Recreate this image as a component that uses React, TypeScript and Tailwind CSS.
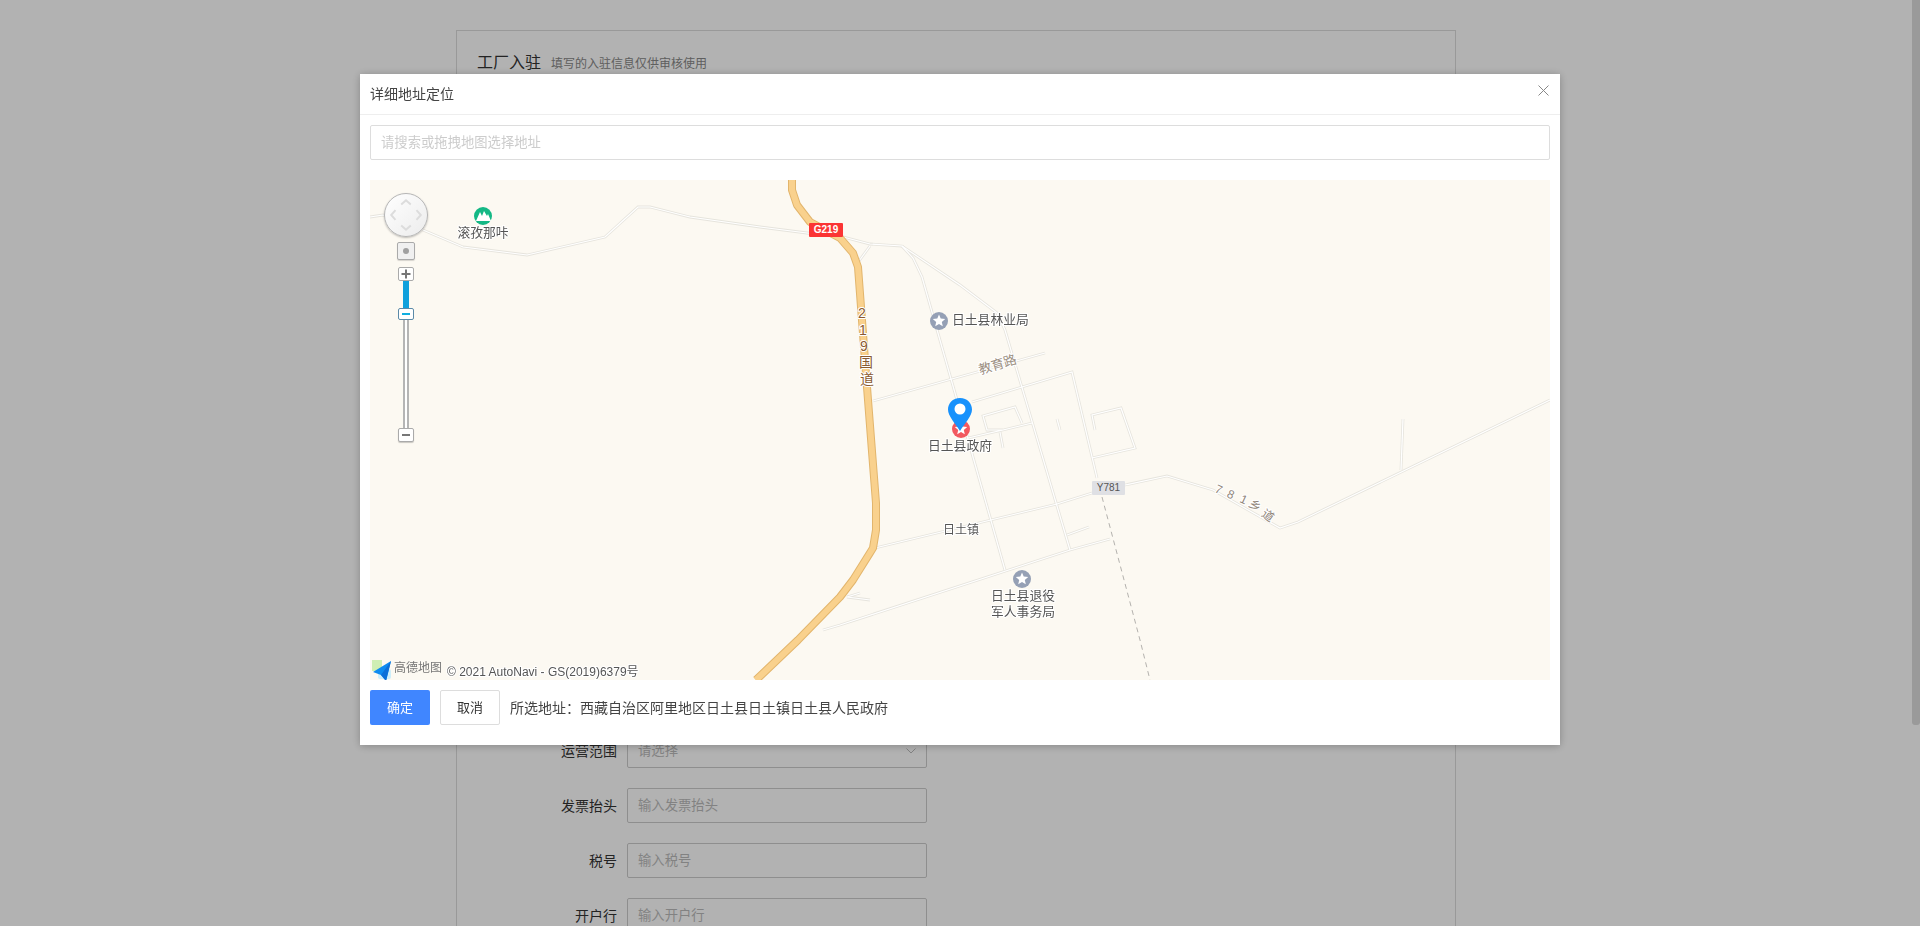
const minorRoads = [
  "M370 217 L383 215 L423 230 L463 247 L527 255 L605 237 L638 207 L650 207 L690 217 L760 227 L807 233 L843 237 L870 244 L902 246 L960 285 L997 313 L1005 330 L1070 550",
  "M870 246 L859 261",
  "M902 246 L913 258 L922 277 L957 400 L973 457 L1005 570",
  "M873 401 L1045 353",
  "M972 402 L1072 372 L1097 478",
  "M968 438 L1003 430 L1032 423 M1003 430 L987 430 L983 416 L1015 407 L1022 423",
  "M1000 432 L1003 448",
  "M1057 419 L1060 430",
  "M1095 430 L1092 415 L1121 408 L1135 448 L1092 458",
  "M875 548 L1057 504 L1092 493 L1125 485 L1167 476 L1213 490 L1280 528 L1298 522 L1550 400",
  "M823 630 L840 625 L1070 550 L1110 539",
  "M1067 535 L1089 527",
  "M847 597 L870 600 M847 597 L860 593",
  "M1403 419 L1401 470",
];

const mainRoad =
  "M792 180 L792 190 L797 205 L810 222 L840 238 L853 253 L858 267 L867 387 L876 503 L876 530 L873 548 L853 580 L840 597 L798 640 L756 680";

const starPoints = (cx: number, cy: number, r: number) => {
  const pts: string[] = [];
  for (let i = 0; i < 10; i++) {
    const rad = i % 2 === 0 ? r : r * 0.45;
    const a = (Math.PI / 5) * i - Math.PI / 2;
    pts.push(`${(cx + rad * Math.cos(a)).toFixed(1)},${(cy + rad * Math.sin(a)).toFixed(1)}`);
  }
  return pts.join(" ");
};

const Poi = ({ x, y, color }: { x: number; y: number; color: string }) => (
  <g>
    <circle cx={x} cy={y} r="9" fill={color} />
    <polygon points={starPoints(x, y, 6.5)} fill="#fff" />
  </g>
);

const MapLabel = ({
  x,
  y,
  children,
  size = 12.8,
  color = "#555",
  anchor = "middle",
  rotate,
}: {
  x: number;
  y: number;
  children: string;
  size?: number;
  color?: string;
  anchor?: "middle" | "start";
  rotate?: number;
}) => (
  <text
    x={x}
    y={y - 1.5}
    fontSize={size}
    fill={color}
    textAnchor={anchor}
    dominantBaseline="central"
    stroke="#fff"
    strokeWidth="2"
    paintOrder="stroke"
    transform={rotate ? `rotate(${rotate} ${x} ${y})` : undefined}
  >
    {children}
  </text>
);

const MapDrawing = () => (
  <svg viewBox="370 180 1180 500" className="block w-full h-full">
    <rect x="370" y="180" width="1180" height="500" fill="#fcf9f2" />
    {minorRoads.map((d, i) => (
      <path key={"c" + i} d={d} fill="none" stroke="#e6e4dd" strokeWidth="2.8" />
    ))}
    {minorRoads.map((d, i) => (
      <path key={"f" + i} d={d} fill="none" stroke="#ffffff" strokeWidth="1.2" />
    ))}
    <path d="M1102 497 L1140 640 L1150 680" fill="none" stroke="#b4b2ae" strokeWidth="1" strokeDasharray="5 4" />
    <path d={mainRoad} fill="none" stroke="#e2b56c" strokeWidth="8" strokeLinejoin="round" />
    <path d={mainRoad} fill="none" stroke="#f9d18d" strokeWidth="6" strokeLinejoin="round" />

    {/* road shields */}
    <rect x="809" y="223" width="34" height="14" rx="1" fill="#fb3434" />
    <text x="826" y="229.5" fontSize="10" fontWeight="700" fill="#fff" textAnchor="middle" dominantBaseline="central">
      G219
    </text>
    <rect x="1092" y="481" width="33" height="14" rx="1" fill="#dfe0e4" />
    <text x="1108.5" y="487.5" fontSize="10" fill="#555" textAnchor="middle" dominantBaseline="central">
      Y781
    </text>

    {/* vertical road name */}
    <MapLabel x={862} y={314} size={14} color="#8a5a30">2</MapLabel>
    <MapLabel x={863} y={331} size={14} color="#8a5a30">1</MapLabel>
    <MapLabel x={864} y={347} size={14} color="#8a5a30">9</MapLabel>
    <MapLabel x={866} y={363} size={14} color="#8a5a30">国</MapLabel>
    <MapLabel x={867} y={380} size={14} color="#8a5a30">道</MapLabel>

    <MapLabel x={998} y={366} size={13} color="#9c8f82" rotate={-17}>教育路</MapLabel>

    <MapLabel x={1218} y={491} size={12} color="#8f8478" rotate={25}>7</MapLabel>
    <MapLabel x={1230} y={496} size={12} color="#8f8478" rotate={25}>8</MapLabel>
    <MapLabel x={1243} y={501} size={12} color="#8f8478" rotate={25}>1</MapLabel>
    <MapLabel x={1254} y={507} size={12} color="#8f8478" rotate={35}>乡</MapLabel>
    <MapLabel x={1267} y={517} size={12} color="#8f8478" rotate={35}>道</MapLabel>

    {/* scenic spot */}
    <circle cx="483" cy="216" r="9" fill="#14b885" />
    <path d="M476 221 L480 212 L482 216 L484 211 L487 216 L488 214 L491 221 Z" fill="#fff" />
    <MapLabel x={483} y={234}>滚孜那咔</MapLabel>

    <Poi x={939} y={321} color="#95a0b5" />
    <MapLabel x={952} y={321} anchor="start">日土县林业局</MapLabel>

    <Poi x={961} y={429} color="#f2585f" />
    <MapLabel x={960} y={447}>日土县政府</MapLabel>

    <MapLabel x={961} y={531} size={12}>日土镇</MapLabel>

    <Poi x={1022} y={579} color="#95a0b5" />
    <MapLabel x={1023} y={597}>日土县退役</MapLabel>
    <MapLabel x={1023} y={613}>军人事务局</MapLabel>

    {/* selected location pin */}
    <path
      d="M960 398 C952.5 398 948 403.5 948 409.5 C948 416 955 423 960 431 C965 423 972 416 972 409.5 C972 403.5 967.5 398 960 398 Z"
      fill="#1791fc"
    />
    <circle cx="960" cy="409" r="5.5" fill="#fff" />

    {/* amap logo */}
    <rect x="372" y="660" width="10" height="11" fill="#cfeeb4" />
    <rect x="378" y="669" width="13" height="10" rx="2" fill="#cdeefa" />
    <path d="M391 661 L373 672 L381 675 L386 681 Z" fill="#0d8bf0" />
    <path d="M391 661 L381 675 L386 681 Z" fill="#0a6fd8" />
    <text x="394" y="668" fontSize="12" fill="#777" dominantBaseline="central">
      高德地图
    </text>
    <text x="447" y="672" fontSize="12" fill="#555" stroke="#fff" strokeWidth="2" paintOrder="stroke" dominantBaseline="central">
      © 2021 AutoNavi - GS(2019)6379号
    </text>
  </svg>
);

const MapControls = () => (
  <>
    <div className="absolute left-[14px] top-[13px] w-[44px] h-[44px] rounded-full border border-[#b5b5b5] bg-gradient-to-br from-white to-[#ececec] shadow-[0_1px_2px_rgba(0,0,0,0.25)]">
      <svg viewBox="0 0 44 44" className="w-full h-full">
        <path
          d="M17 11 L22 6.5 L27 11 M11 17 L6.5 22 L11 27 M33 17 L37.5 22 L33 27 M17 33 L22 37.5 L27 33"
          fill="none"
          stroke="#dcdcdc"
          strokeWidth="2"
        />
      </svg>
    </div>
    <div className="absolute left-[27px] top-[62px] w-[18px] flex flex-col items-center">
      <div className="w-[18px] h-[18px] rounded-[2px] border border-[#aaa] bg-[#f0f0f0] flex items-center justify-center shadow-[0_1px_1px_rgba(0,0,0,0.15)]">
        <div className="w-[6px] h-[6px] rounded-full bg-[#a0a0a0]" />
      </div>
      <div className="mt-[7px] w-4 h-[14px] rounded-[2px] border border-[#aaa] bg-white flex items-center justify-center">
        <svg viewBox="0 0 10 10" className="w-[10px] h-[10px]">
          <path d="M0.5 5 H9.5 M5 0.5 V9.5" stroke="#777" strokeWidth="2" />
        </svg>
      </div>
      <div className="w-[6px] h-[27px] bg-[#0fa0dc]" />
      <div className="w-4 h-3 rounded-[2px] border border-[#5b8aa8] bg-white flex items-center justify-center">
        <div className="w-2 h-[2px] bg-[#10aee0]" />
      </div>
      <div className="w-[6px] h-[108px] border-x-2 border-[#b5b5b5] bg-white" />
      <div className="w-4 h-[14px] rounded-[2px] border border-[#aaa] bg-white flex items-center justify-center shadow-[0_1px_1px_rgba(0,0,0,0.2)]">
        <div className="w-2 h-[2px] bg-[#777]" />
      </div>
    </div>
  </>
);

const BackgroundField = ({ label, placeholder, select }: { label: string; placeholder: string; select?: boolean }) => (
  <div className="flex items-center gap-[10px] mb-5">
    <div className="w-[160px] text-right text-sm text-[#333]">{label}</div>
    <div className="w-[300px] h-[35px] border border-[#ccc] rounded-[2px] px-[10px] text-[13.3333px] text-[#bbb] flex items-center justify-between">
      {placeholder}
      {select && (
        <svg viewBox="0 0 10 6" className="w-[10px] h-[6px]">
          <path d="M0.5 0.5 L5 5 L9.5 0.5" fill="none" stroke="#bbb" />
        </svg>
      )}
    </div>
  </div>
);

const App = () => {
  return (
    <div className="relative h-[926px] overflow-hidden bg-white pr-2 font-['Liberation_Sans','Noto_Sans_CJK_SC',sans-serif]">
      <div className="w-[1000px] h-[1000px] mx-auto mt-[30px] border border-[#dcdcdc]">
        <div className="flex items-baseline gap-[10px] pl-5 pt-[20px]">
          <span className="text-base text-[#333]">工厂入驻</span>
          <span className="text-xs text-[#888]">填写的入驻信息仅供审核使用</span>
        </div>
        <div className="mt-[658px]">
          <BackgroundField label="运营范围" placeholder="请选择" select />
          <BackgroundField label="发票抬头" placeholder="输入发票抬头" />
          <BackgroundField label="税号" placeholder="输入税号" />
          <BackgroundField label="开户行" placeholder="输入开户行" />
        </div>
      </div>

      <div className="fixed inset-0 bg-black/30">
        <div className="w-[1200px] mx-auto mt-[74px] bg-white shadow-[0_1px_8px_rgba(0,0,0,0.25)]">
          <div className="relative h-[41px] flex items-center px-[10px] border-b border-[#eee] text-sm text-[#444]">
            详细地址定位
            <svg viewBox="0 0 11 11" className="absolute right-[11px] top-[11px] w-[11px] h-[11px]">
              <path d="M0.5 0.5 L10.5 10.5 M10.5 0.5 L0.5 10.5" stroke="#888" fill="none" />
            </svg>
          </div>
          <div className="px-[10px] pt-[10px] pb-5">
            <div className="h-[35px] border border-[#ddd] rounded-[2px] flex items-center px-[10px] text-[13.3333px] text-[#ccc]">
              请搜索或拖拽地图选择地址
            </div>
            <div className="relative h-[500px] mt-5">
              <MapDrawing />
              <MapControls />
            </div>
            <div className="flex items-center mt-[10px]">
              <button className="w-[60px] h-[35px] rounded-[2px] bg-[#4086ff] text-[13px] text-white">确定</button>
              <button className="w-[60px] h-[35px] ml-[10px] rounded-[2px] border border-[#ddd] bg-white text-[13px] text-[#333]">
                取消
              </button>
              <span className="ml-[10px] text-sm text-[#444]">所选地址：西藏自治区阿里地区日土县日土镇日土县人民政府</span>
            </div>
          </div>
        </div>
        <div className="absolute right-0 top-0 w-2 h-[725px] rounded-b-[3px] bg-[#9a9a9a]" />
      </div>
    </div>
  );
};

export default App;
